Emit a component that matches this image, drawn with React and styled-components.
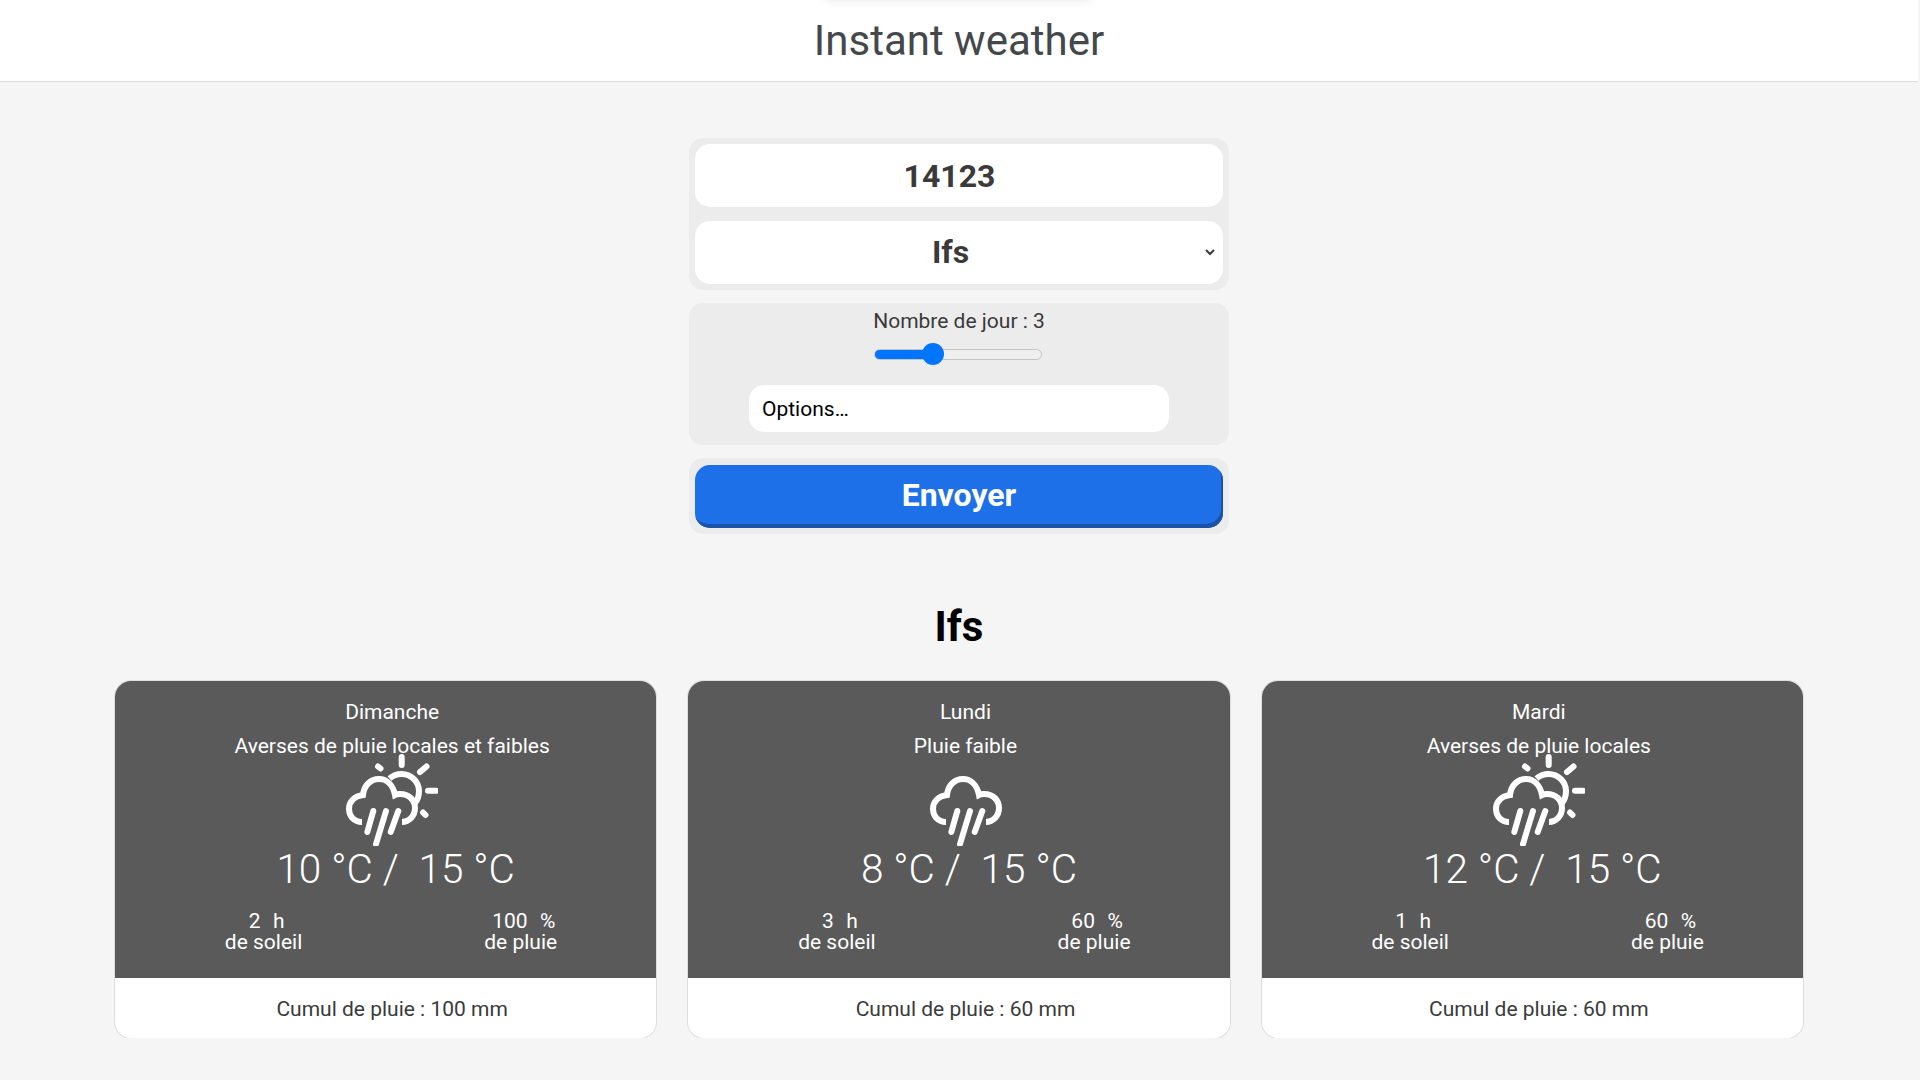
import React from 'react';
import styled, { createGlobalStyle } from 'styled-components';

const GlobalStyle = createGlobalStyle`
  html, body {
    margin: 0;
    background: #f5f5f5;
    font-family: Roboto, "Liberation Sans", sans-serif;
    overflow: hidden;
  }
`;

const Page = styled.div`
  width: 1918px;
`;

const Header = styled.header`
  position: relative;
  height: 81px;
  background: #fff;
  border-bottom: 1px solid #dcdcdc;
  display: flex;
  justify-content: center;
  align-items: center;
  overflow: hidden;
`;

const TopShadow = styled.div`
  position: absolute;
  top: -12px;
  left: 826px;
  width: 266px;
  height: 12px;
  box-shadow: 0 0 10px rgba(0, 0, 0, 0.1);
`;

const Title = styled.h1`
  margin: 0;
  font-size: 42px;
  font-weight: 400;
  color: #45484b;
`;

const Form = styled.form`
  width: 540px;
  margin: 56px auto 0;
  display: flex;
  flex-direction: column;
  gap: 13px;
`;

const Panel = styled.div`
  background: #ececec;
  border-radius: 14px;
  padding: 6px;
  display: flex;
  flex-direction: column;
  gap: 14px;
`;

const DaysPanel = styled(Panel)`
  height: 142px;
  box-sizing: border-box;
  align-items: center;
  gap: 0;
`;

const ZipInput = styled.input`
  box-sizing: border-box;
  width: 100%;
  height: 63px;
  border: none;
  outline: none;
  border-radius: 15px;
  background: #fff;
  padding: 0 19px 0 0;
  text-align: center;
  font: 700 32px Roboto, sans-serif;
  color: #3a3a3a;
`;

const CitySelect = styled.select`
  box-sizing: border-box;
  width: 100%;
  height: 63px;
  border: none;
  border-right: 5px solid #fff;
  outline: none;
  border-radius: 15px;
  background-color: #fff;
  padding: 0 0 2px;
  text-align: center;
  text-align-last: center;
  font: 700 32px Roboto, sans-serif;
  color: #3a3a3a;
`;

const DaysLabel = styled.label`
  font-size: 21px;
  line-height: 24px;
  color: #3a3a3a;
`;

const DaysSlider = styled.input`
  appearance: none;
  -webkit-appearance: none;
  display: block;
  width: 168px;
  height: 22px;
  margin: 10px 3px 20px 0;
  background: transparent;

  &::-webkit-slider-runnable-track {
    height: 11px;
    box-sizing: border-box;
    border-radius: 6px;
    border: 1px solid #c4c4c4;
    background: linear-gradient(to right, #0075ff ${({ $fill }) => $fill}px, #efefef ${({ $fill }) => $fill}px);
  }

  &::-webkit-slider-thumb {
    -webkit-appearance: none;
    width: 22px;
    height: 22px;
    margin-top: -6.5px;
    border-radius: 50%;
    background: #0075ff;
  }
`;

const OptionsBox = styled.div`
  box-sizing: border-box;
  width: 420px;
  height: 47px;
  flex: none;
  border-radius: 15px;
  background: #fff;
  padding: 0 13px;
  display: flex;
  align-items: center;
  font-size: 21px;
  color: #000;
`;

const SubmitButton = styled.button`
  width: 100%;
  height: 63px;
  margin-top: 1px;
  border: none;
  border-radius: 15px;
  background: #1d70e8;
  box-shadow: inset -2px -4px 0 #1a52a8;
  padding: 0 0 4px;
  font: 700 32px Roboto, sans-serif;
  color: #fff;
`;

const City = styled.h2`
  margin: 71px 0 33px;
  text-align: center;
  font-size: 42px;
  line-height: 43px;
  font-weight: 700;
  color: #000;
`;

const Cards = styled.section`
  width: 1688px;
  margin: 0 auto;
  display: grid;
  grid-template-columns: repeat(3, 1fr);
  gap: 32px;
`;

const Card = styled.article`
  height: 357px;
  border-radius: 16px;
  overflow: hidden;
  display: flex;
  flex-direction: column;
  background: #fff;
  box-shadow: 0 0 0 1px #dedede;
`;

const CardBody = styled.div`
  height: 297px;
  box-sizing: border-box;
  background: #5a5a5a;
  color: #fff;
  padding: 19px 0 0 13px;
  text-align: center;
`;

const CardLine = styled.div`
  font-size: 21px;
  line-height: 24px;
  margin-bottom: 10px;
`;

const IconWrap = styled.div`
  height: 92px;
  margin-top: -14px;
  display: flex;
  justify-content: center;
`;

const Temp = styled.div`
  font-size: 40.5px;
  line-height: 50px;
  font-weight: 300;
  padding-left: 7px;
  margin-top: -2px;
  white-space: pre;
`;

const Stats = styled.div`
  display: grid;
  grid-template-columns: 1fr 1fr;
  padding: 0 7px;
  margin-top: 17px;
`;

const Stat = styled.div`
  font-size: 21px;
  line-height: 21px;
  white-space: pre;
`;

const StatValue = styled.div`
  padding-left: 6px;
  word-spacing: 1px;
`;

const CardFooter = styled.div`
  flex: 1;
  display: flex;
  justify-content: center;
  align-items: center;
  padding: 2px 0 0 13px;
  font-size: 21px;
  color: #3a3a3a;
`;

const WeatherIcon = ({ sun }) => (
  <svg width="92" height="92" viewBox="0 0 92 92" fill="none" stroke="#fff" strokeWidth="6" strokeLinecap="round">
    {sun && (
      <g>
        <path d="M55.7 3V11M74 18L80.5 12.5M82 36.7H90M77 58.5L79.5 61M32 12.5L34.5 14.5" />
        <path d="M43.5 24.5C47 21.5 51 20 55.5 20C65.5 20 73 28 73 37C73 42 71.5 46 69 49" strokeLinecap="butt" />
      </g>
    )}
    <g transform={sun ? undefined : 'translate(11 0)'}>
      <path
        d="M16 68C8 68 3 62 3 55C3 47 9 42 17 41C18 31 25 25 33 25C41 25 47 31 49 41C51 40 52 40 54 40C63 40 69 46 69 54C69 62 63 68 56 68"
        strokeLinecap="butt"
      />
      <path d="M27.3 57L21.3 78M40 57L30 90M52.3 57L44.7 78" />
    </g>
  </svg>
);

const days = [
  { day: 'Dimanche', desc: 'Averses de pluie locales et faibles', sun: true, min: 10, max: 15, sunH: 2, rain: 100, total: 100 },
  { day: 'Lundi', desc: 'Pluie faible', sun: false, min: 8, max: 15, sunH: 3, rain: 60, total: 60 },
  { day: 'Mardi', desc: 'Averses de pluie locales', sun: true, min: 12, max: 15, sunH: 1, rain: 60, total: 60 },
];

export default function App() {
  return (
    <Page>
      <GlobalStyle />
      <Header>
        <TopShadow />
        <Title>Instant weather</Title>
      </Header>
      <Form onSubmit={(e) => e.preventDefault()}>
        <Panel>
          <ZipInput type="text" defaultValue="14123" />
          <CitySelect defaultValue="Ifs">
            <option>Ifs</option>
          </CitySelect>
        </Panel>
        <DaysPanel>
          <DaysLabel htmlFor="days">Nombre de jour : 3</DaysLabel>
          <DaysSlider id="days" type="range" min="1" max="7" defaultValue="3" $fill={60} />
          <OptionsBox>Options…</OptionsBox>
        </DaysPanel>
        <Panel>
          <SubmitButton type="submit">Envoyer</SubmitButton>
        </Panel>
      </Form>
      <City>Ifs</City>
      <Cards>
        {days.map((d) => (
          <Card key={d.day}>
            <CardBody>
              <CardLine>{d.day}</CardLine>
              <CardLine>{d.desc}</CardLine>
              <IconWrap>
                <WeatherIcon sun={d.sun} />
              </IconWrap>
              <Temp>{`${d.min} °C / \u00a0${d.max} °C`}</Temp>
              <Stats>
                <Stat>
                  <StatValue>{`${d.sunH} \u00a0h`}</StatValue>
                  de soleil
                </Stat>
                <Stat>
                  <StatValue>{`${d.rain} \u00a0%`}</StatValue>
                  de pluie
                </Stat>
              </Stats>
            </CardBody>
            <CardFooter>Cumul de pluie : {d.total} mm</CardFooter>
          </Card>
        ))}
      </Cards>
    </Page>
  );
}
